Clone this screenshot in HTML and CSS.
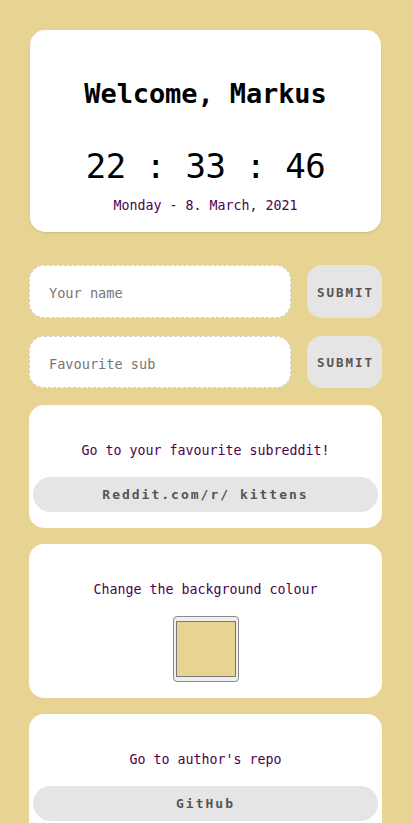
FILE: index.html
```html
<!DOCTYPE html>
<html lang="en">
<head>
<meta charset="utf-8">
<title>Dashboard</title>
<link rel="stylesheet" href="styles.css">
</head>
<body>
<main class="page">
  <section class="card hero">
    <h1 class="welcome">Welcome, Markus</h1>
    <div class="clock">22 : 33 : 46</div>
    <div class="date">Monday - 8. March, 2021</div>
  </section>

  <form class="row first">
    <input class="field" type="text" placeholder="Your name">
    <button class="submit" type="button">SUBMIT</button>
  </form>
  <form class="row second">
    <input class="field" type="text" placeholder="Favourite sub">
    <button class="submit" type="button">SUBMIT</button>
  </form>

  <section class="card panel">
    <p class="label">Go to your favourite subreddit!</p>
    <a class="pill">Reddit.com/r/ kittens</a>
  </section>

  <section class="card panel">
    <p class="label">Change the background colour</p>
    <div class="picker"><div class="swatch"></div></div>
  </section>

  <section class="card panel">
    <p class="label">Go to author's repo</p>
    <a class="pill">GitHub</a>
  </section>
</main>
</body>
</html>
```

FILE: styles.css
```css
html, body {
  margin: 0;
  padding: 0;
  background: #e8d492;
}
body {
  font-family: "DejaVu Sans Mono", "Liberation Mono", monospace;
  color: #000;
}
.page {
  padding: 30px 29px 0 29px;
  display: flex;
  flex-direction: column;
}
.card {
  background: #fff;
  border-radius: 15px;
  text-align: center;
}
.hero {
  margin: 0 1px;
  padding: 44px 0 16px;
  box-shadow: 0 1px 2px rgba(0,0,0,0.12);
}
.welcome {
  margin: 0;
  font-size: 27px;
  line-height: 40px;
  font-weight: bold;
  letter-spacing: -0.1px;
}
.clock {
  margin-top: 30px;
  font-size: 34px;
  line-height: 44px;
  letter-spacing: -0.5px;
}
.date {
  margin-top: 8px;
  font-size: 13.3px;
  line-height: 20px;
  color: #4d0050;
}
.row {
  display: flex;
  gap: 16px;
  margin: 0;
}
.row.first { margin-top: 33px; }
.row.second { margin-top: 18px; }
.field {
  flex: 1;
  min-width: 0;
  height: 53px;
  box-sizing: border-box;
  border: 1px dashed #cfcfcf;
  border-radius: 15px;
  background: #fff;
  padding: 3px 0 0 19px;
  font-family: inherit;
  font-size: 13.6px;
  color: #333;
  outline: none;
}
.second .field, .second .submit { height: 52px; }
.field::placeholder { color: #767676; }
.submit {
  width: 75px;
  height: 53px;
  border: none;
  border-radius: 15px;
  background: #e5e5e5;
  color: #555;
  font-family: inherit;
  font-weight: bold;
  font-size: 12.5px;
  letter-spacing: 2px;
  padding: 1px 0 0 2px;
}
.panel {
  margin-top: 17px;
  padding: 36px 4px 16px;
  display: flex;
  flex-direction: column;
  align-items: stretch;
}
.panel + .panel { margin-top: 16px; }
.label {
  margin: 0 0 16px;
  font-size: 13.3px;
  line-height: 20px;
  color: #4d0050;
}
.pill {
  display: block;
  height: 35px;
  line-height: 36px;
  border-radius: 18px;
  background: #e5e5e5;
  color: #555;
  font-weight: bold;
  font-size: 13px;
  letter-spacing: 2px;
}
.picker {
  align-self: center;
  width: 66px;
  height: 66px;
  box-sizing: border-box;
  border: 1px solid #8a8a8a;
  border-radius: 4px;
  background: #efefef;
  padding: 4px 2px;
}
.swatch {
  height: 100%;
  box-sizing: border-box;
  border: 1px solid #777;
  background: #e8d492;
}
```
